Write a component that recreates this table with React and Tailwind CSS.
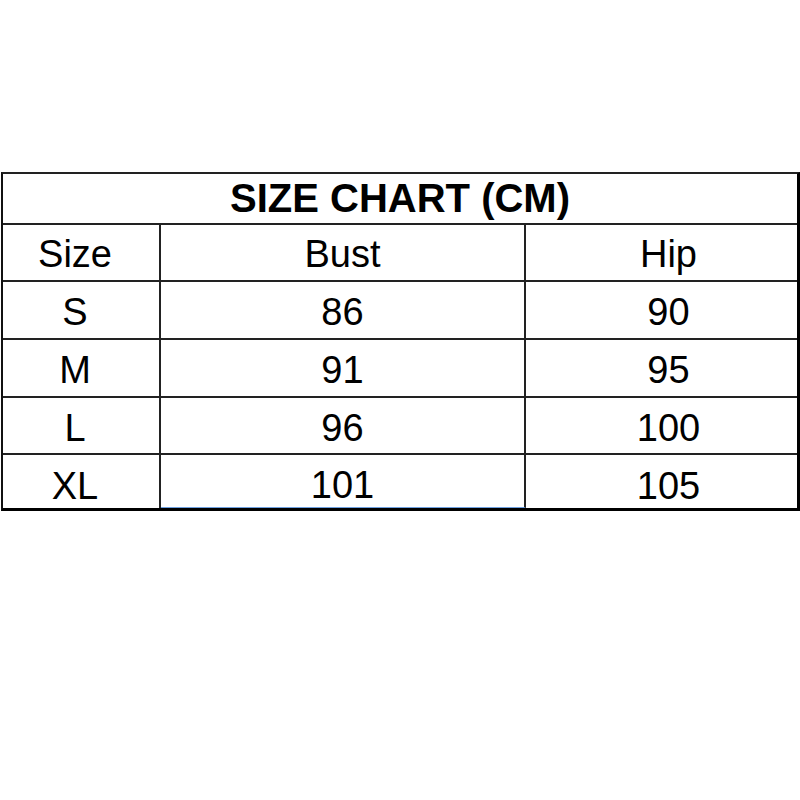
const rows = [
  ['S', '86', '90', 'h-[58px]'],
  ['M', '91', '95', 'h-[58px]'],
  ['L', '96', '100', 'h-[57px]'],
  ['XL', '101', '105', 'h-[53px]'],
]

export default function App() {
  return (
    <div className="w-[800px] h-[800px] bg-white pt-[172px]" style={{ fontFamily: '"Liberation Sans", Arial, sans-serif' }}>
      <div className="ml-[1px] w-[799px] border-t-2 border-l-2 border-r-[3px] border-b-[3px] border-t-[#222] border-l-[#111] border-r-black border-b-black text-black">
        {/* title */}
        <div className="h-[51px] border-b-2 border-[#222] flex items-center justify-center text-[40px] font-bold leading-none pb-[2px]">
          SIZE CHART (CM)
        </div>

        {/* header */}
        <div className="grid grid-cols-[158px_365px_1fr] h-[57px] border-b-2 border-[#222] text-[38px] leading-none">
          <div className="flex items-center justify-center border-r-2 border-[#222] pr-[12px] pt-[3px]">Size</div>
          <div className="flex items-center justify-center border-r-2 border-[#222] pt-[3px]">Bust</div>
          <div className="flex items-center justify-center pl-[14px] pt-[3px]">Hip</div>
        </div>

        {rows.map((r, i) => {
          const last = i === rows.length - 1
          const pad = last ? ' pt-[8px]' : ' pt-[4px]'
          return (
            <div
              key={r[0]}
              className={'grid grid-cols-[158px_365px_1fr] text-[38px] leading-none ' + r[3] + (last ? '' : ' border-b-2 border-[#222]')}
            >
              <div className={'flex items-center justify-center border-r-2 border-[#222] pr-[12px]' + pad}>{r[0]}</div>
              <div className={'flex items-center justify-center border-r-2 border-[#222]' + pad + (last ? ' border-b border-b-[#6ea0e0]' : '')}>
                {r[1]}
              </div>
              <div className={'flex items-center justify-center pl-[14px]' + pad}>{r[2]}</div>
            </div>
          )
        })}
      </div>
    </div>
  )
}
